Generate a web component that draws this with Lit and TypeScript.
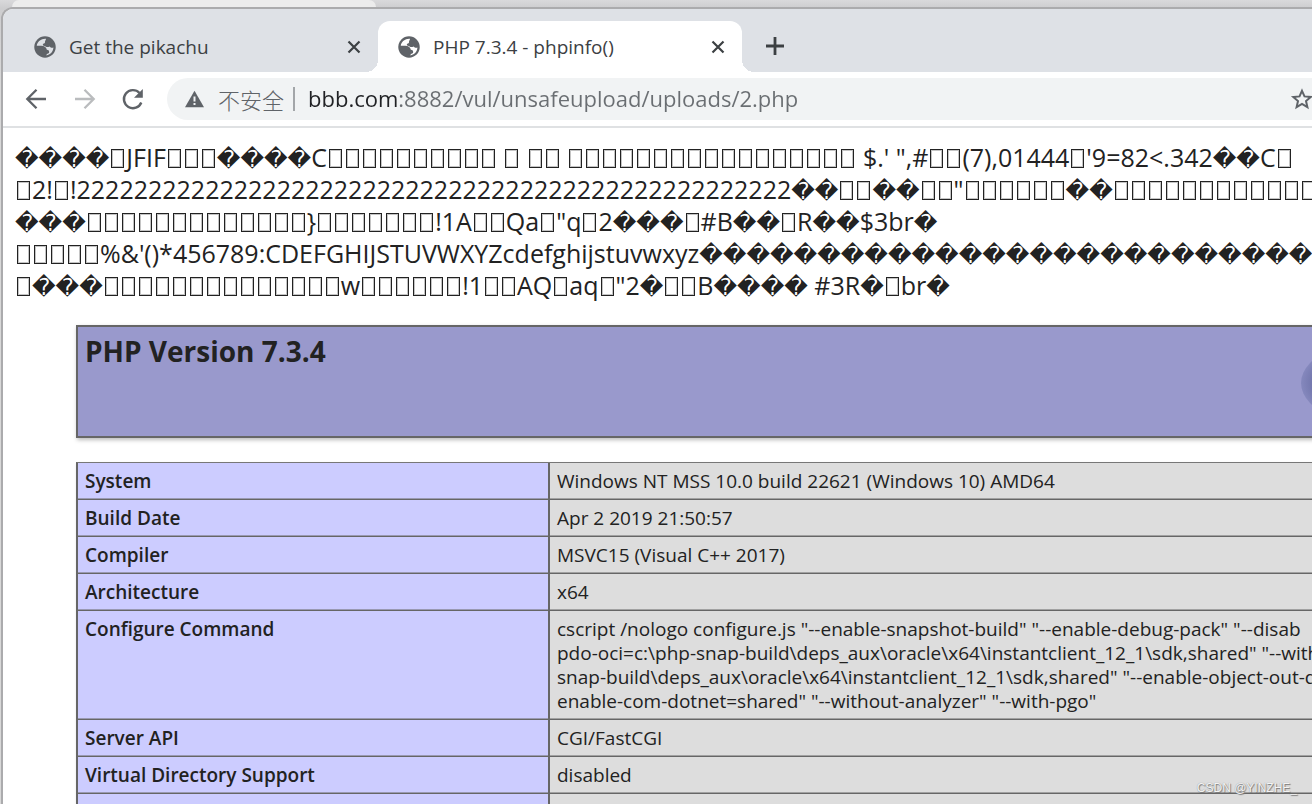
import { LitElement, html, svg, css } from "lit";
import { customElement, property } from "lit/decorators.js";

const box = (n: number) => "\u25AF".repeat(n);
const bad = (n: number) => "\uFFFD".repeat(n);

// Raw bytes of the image header, decoded as text.
const RAW_LINES: string[] = [
  `${bad(4)}${box(1)}JFIF${box(3)}${bad(4)}C${box(10)} ${box(1)} ${box(2)} ${box(17)} $.' ",#${box(2)}(7),01444${box(1)}'9=82<.342${bad(2)}C${box(1)}`,
  `${box(1)}2!${box(1)}!${"2".repeat(50)}${bad(2)}${box(2)}${bad(2)}${box(2)}"${box(6)}${bad(2)}${box(12)}`,
  `${bad(3)}${box(13)}}${box(7)}!1A${box(2)}Qa${box(1)}"q${box(1)}2${bad(3)}${box(1)}#B${bad(2)}${box(1)}R${bad(2)}$3br${bad(1)}`,
  `${box(5)}%&'()*456789:CDEFGHIJSTUVWXYZcdefghijstuvwxyz${bad(27)}`,
  `${box(1)}${bad(3)}${box(14)}w${box(6)}!1${box(2)}AQ${box(1)}aq${box(1)}"2${bad(1)}${box(2)}B${bad(4)} #3R${bad(1)}${box(1)}br${bad(1)}`,
];

const ROWS: { name: string; lines: string[] }[] = [
  { name: "System", lines: ["Windows NT MSS 10.0 build 22621 (Windows 10) AMD64"] },
  { name: "Build Date", lines: ["Apr 2 2019 21:50:57"] },
  { name: "Compiler", lines: ["MSVC15 (Visual C++ 2017)"] },
  { name: "Architecture", lines: ["x64"] },
  {
    name: "Configure Command",
    lines: [
      'cscript /nologo configure.js "--enable-snapshot-build" "--enable-debug-pack" "--disab',
      'pdo-oci=c:\\php-snap-build\\deps_aux\\oracle\\x64\\instantclient_12_1\\sdk,shared" "--with',
      'snap-build\\deps_aux\\oracle\\x64\\instantclient_12_1\\sdk,shared" "--enable-object-out-d',
      'enable-com-dotnet=shared" "--without-analyzer" "--with-pgo"',
    ],
  },
  { name: "Server API", lines: ["CGI/FastCGI"] },
  { name: "Virtual Directory Support", lines: ["disabled"] },
  { name: "", lines: [""] },
];

const globe = svg`<svg class="globe" viewBox="0 0 24 24" aria-hidden="true">
  <circle cx="12" cy="12" r="11.700" fill="#5f6368"/>
  <path fill="var(--land)" d="M13 3C8 2.600 3.600 6 3 10.500H8C11 10.500 13.500 12 14 15c2 0 2.800 1.500 2.500 3-.2 1-1.500 1.500-2.500 1.500L13.500 21.200C17.500 20.500 21 17.500 21.200 12.600 19.500 13.300 18 12.500 17 11.500 15.500 12.300 13 12.500 12 11 10 11.200 9 9.500 10 8.500 11.500 8 12.500 7.500 12 6 12 5 13.200 4.500 13 3z"/>
</svg>`;

const cross = svg`<svg class="cross" viewBox="0 0 14 14" aria-hidden="true">
  <path d="M1.500 1.500 12.500 12.500M12.500 1.500 1.500 12.500" stroke="#3c4043" stroke-width="2.200" fill="none"/>
</svg>`;

@customElement("browser-tab")
class BrowserTab extends LitElement {
  @property() label = "";
  @property({ type: Boolean, reflect: true }) active = false;

  static styles = css`
    :host {
      --land: #dee1e6;
      display: flex;
      align-items: center;
      position: relative;
      box-sizing: border-box;
      width: 364px;
      height: 51px;
      padding: 0 17px 0 20px;
      border-radius: 12px 12px 0 0;
    }
    :host([active]) { --land: #fff; background: #fff; }
    :host([active])::before,
    :host([active])::after {
      content: "";
      position: absolute;
      bottom: 0;
      width: 12px;
      height: 12px;
    }
    :host([active])::before {
      right: 100%;
      background: radial-gradient(circle at 0 0, transparent 12px, #fff 12px);
    }
    :host([active])::after {
      left: 100%;
      background: radial-gradient(circle at 100% 0, transparent 12px, #fff 12px);
    }
    button { border: 0; background: none; padding: 0; margin: 0; cursor: pointer; }
    .title {
      display: flex;
      align-items: center;
      gap: 13px;
      flex: 1;
      font: 19px/24px "Open Sans", "Noto Sans", sans-serif;
      color: #3c4043;
      white-space: nowrap;
    }
    .globe { width: 22px; height: 22px; display: block; }
    .cross { width: 14px; height: 14px; display: block; }
  `;

  render() {
    return html`
      <button class="title" role="tab" aria-selected=${this.active}>${globe}<span>${this.label}</span></button>
      <button aria-label="Close">${cross}</button>
    `;
  }
}

@customElement("app-root")
class AppRoot extends LitElement {
  static styles = css`
    :host {
      display: flex;
      flex-direction: column;
      position: relative;
      box-sizing: border-box;
      height: 100vh;
      overflow: hidden;
      background: linear-gradient(#d9d9db, #cdcdcf 8px, #d8d8d8 80px);
      font-family: "Open Sans", "Noto Sans", "Noto Sans CJK SC", sans-serif;
      color: #222;
    }
    button { border: 0; background: none; padding: 0; margin: 0; cursor: pointer; }
    .behind {
      flex: none;
      height: 7px;
      width: 364px;
      margin-left: 12px;
      background: #ececec;
      border-radius: 12px 12px 0 0;
    }
    .window {
      flex: 1;
      min-height: 0;
      display: flex;
      flex-direction: column;
      margin-left: 1px;
      border: 2px solid #ababad;
      border-width: 2px 0 0 2px;
      border-radius: 12px 0 0 0;
      background: #fff;
      overflow: hidden;
    }
    .tabs {
      flex: none;
      display: flex;
      align-items: flex-end;
      height: 63px;
      padding-left: 11px;
      background: #dee1e6;
    }
    .plus { margin: 0 0 16px 23px; height: 20px; }
    .plus svg { display: block; width: 20px; height: 20px; }
    .toolbar {
      flex: none;
      display: flex;
      align-items: center;
      height: 54px;
      padding-left: 21px;
      border-bottom: 2px solid #dfe1e3;
    }
    .nav { display: flex; gap: 23px; }
    .nav svg { display: block; width: 25px; height: 24px; }
    .omnibox {
      flex: 1;
      display: flex;
      align-items: center;
      height: 42px;
      margin-left: 22px;
      padding-left: 18px;
      background: #f1f3f4;
      border-radius: 21px 0 0 21px;
    }
    .warn { width: 19px; height: 18px; display: block; }
    .insecure {
      margin-left: 14px;
      padding-right: 9px;
      font: 300 22px/24px "Noto Sans CJK SC", sans-serif;
      color: #5f6368;
      border-right: 2px solid #a3a6a9;
    }
    .url {
      flex: 1;
      min-width: 0;
      height: 36px;
      margin: 0 0 2px 13px;
      padding: 0;
      border: 0;
      outline: 0;
      font: 22px/30px "Open Sans", "Noto Sans", sans-serif;
      color: transparent;
      background: linear-gradient(90deg, #202124 90px, #6a6e72 90px);
      -webkit-background-clip: text;
      background-clip: text;
    }
    .star { flex: none; margin-right: -2px; }
    .star svg { display: block; width: 24px; height: 24px; }
    .page { flex: 1; min-height: 0; overflow: hidden; padding: 13px 0 0 12px; }
    .raw { margin: 0; font-size: 25px; line-height: 32px; white-space: pre; }
    .line { height: 32px; }
    .tofu {
      display: inline-block;
      box-sizing: border-box;
      width: 13px;
      height: 19px;
      margin: 0 2px;
      border: 1px solid #222;
      box-shadow: inset 0 0 0 1px #c4c4c4;
      font: 16px/17px "DejaVu Sans", sans-serif;
      color: transparent;
      text-align: center;
      vertical-align: baseline;
      overflow: hidden;
      vertical-align: -1px;
    }
    .bad { font: 23px/32px "DejaVu Sans", sans-serif; }
    .info { min-width: 1470px; margin: 24px 0 0 61px; }
    .banner {
      display: flex;
      justify-content: space-between;
      align-items: center;
      box-sizing: border-box;
      width: 1470px;
      height: 113px;
      padding: 0 7px;
      background: #9999cc;
      border: 2px solid #666;
      box-shadow: 1px 2px 4px #bbb;
    }
    .banner h1 { align-self: flex-start; margin: 4px 0 0; font-size: 28px; line-height: 40px; }
    .banner svg { display: block; width: 236px; height: 106px; }
    table {
      width: 1470px;
      margin-top: 24px;
      border-collapse: separate;
      border-spacing: 0;
      border-top: 1px solid #777;
      border-left: 2px solid #666;
      font-size: 19px;
      line-height: 24px;
      box-shadow: 1px 2px 3px #ccc;
    }
    th, td {
      height: 24px;
      padding: 6px 7px;
      vertical-align: top;
      text-align: left;
      white-space: nowrap;
      border-bottom: 1px solid #666;
      box-shadow: inset 0 -1px rgba(102, 102, 102, 0.5);
    }
    th { width: 456px; font-weight: 600; background: #ccccff; border-right: 2px solid #666; }
    td { background: #dddddd; }
    .row-line { display: block; }
    .mark {
      position: absolute;
      right: 15px;
      bottom: 7px;
      font: 12px/18px "Liberation Sans", sans-serif;
      color: #f4f4f4;
      text-shadow: 1px 1px 1px #777, 0 0 1px #888;
    }
  `;

  private rawLine(text: string) {
    const runs = text.match(/\u25AF|\uFFFD+|[^\u25AF\uFFFD]+/g) ?? [];
    return html`<div class="line">${runs.map((r) =>
      r[0] === "\u25AF" ? html`<span class="tofu">${r}</span>` : r[0] === "\uFFFD" ? html`<span class="bad">${r}</span>` : r
    )}</div>`;
  }

  render() {
    return html`
      <div class="behind"></div>
      <div class="window">
        <div class="tabs">
          <browser-tab label="Get the pikachu"></browser-tab>
          <browser-tab label="PHP 7.3.4 - phpinfo()" active></browser-tab>
          <button class="plus" aria-label="New tab">
            <svg viewBox="0 0 20 20"><path d="M10 1v18M1 10h18" stroke="#3c4043" stroke-width="2.800" fill="none"/></svg>
          </button>
        </div>
        <div class="toolbar">
          <div class="nav">
            <button aria-label="Back">
              <svg viewBox="0 0 25 24"><path d="M22 12H3.500M12.500 2.800 3.300 12l9.200 9.200" stroke="#5f6368" stroke-width="2.300" fill="none"/></svg>
            </button>
            <button aria-label="Forward">
              <svg viewBox="0 0 25 24"><path d="M3 12h18.500M12.500 2.800 21.700 12l-9.200 9.200" stroke="#babcbe" stroke-width="2.300" fill="none"/></svg>
            </button>
            <button aria-label="Reload">
              <svg viewBox="0 0 25 24"><path d="M21.300 15.500A9 9 0 1 1 19.500 6" stroke="#5f6368" stroke-width="2.400" fill="none"/><path d="M22.800 2v8.800H14z" fill="#5f6368"/></svg>
            </button>
          </div>
          <div class="omnibox">
            <svg class="warn" viewBox="0 0 19 18"><path d="M9.500 .8 19 17.300H0z" fill="#5f6368"/><path d="M8.500 6.500h2v5h-2zM8.500 13h2v2h-2z" fill="#f1f3f4"/></svg>
            <span class="insecure">不安全</span>
            <input class="url" aria-label="Address" value="bbb.com:8882/vul/unsafeupload/uploads/2.php" spellcheck="false" />
            <button class="star" aria-label="Bookmark">
              <svg viewBox="0 0 24 24"><path d="M12 3.800l2.500 5.600 6.200.6-4.700 4.100 1.400 6-5.400-3.200-5.400 3.200 1.400-6L3.300 10l6.200-.6z" fill="none" stroke="#5f6368" stroke-width="2"/></svg>
            </button>
          </div>
        </div>
        <main class="page">
          <div class="raw">${RAW_LINES.map((l) => this.rawLine(l))}</div>
          <div class="info">
            <header class="banner">
              <h1>PHP Version 7.3.4</h1>
              <svg viewBox="0 0 236 106" aria-hidden="true">
                <defs>
                  <radialGradient id="g"><stop offset="0.900" stop-color="#7377ad"/><stop offset="1" stop-color="#8588bd"/></radialGradient>
                </defs>
                <ellipse cx="118" cy="54" rx="118" ry="52" fill="url(#g)"/>
              </svg>
            </header>
            <table>
              <tbody>
                ${ROWS.map((r) => html`<tr>
                  <th scope="row">${r.name}</th>
                  <td>${r.lines.map((l) => html`<span class="row-line">${l}</span>`)}</td>
                </tr>`)}
              </tbody>
            </table>
          </div>
        </main>
      </div>
      <div class="mark">CSDN @YINZHE_</div>
    `;
  }
}
